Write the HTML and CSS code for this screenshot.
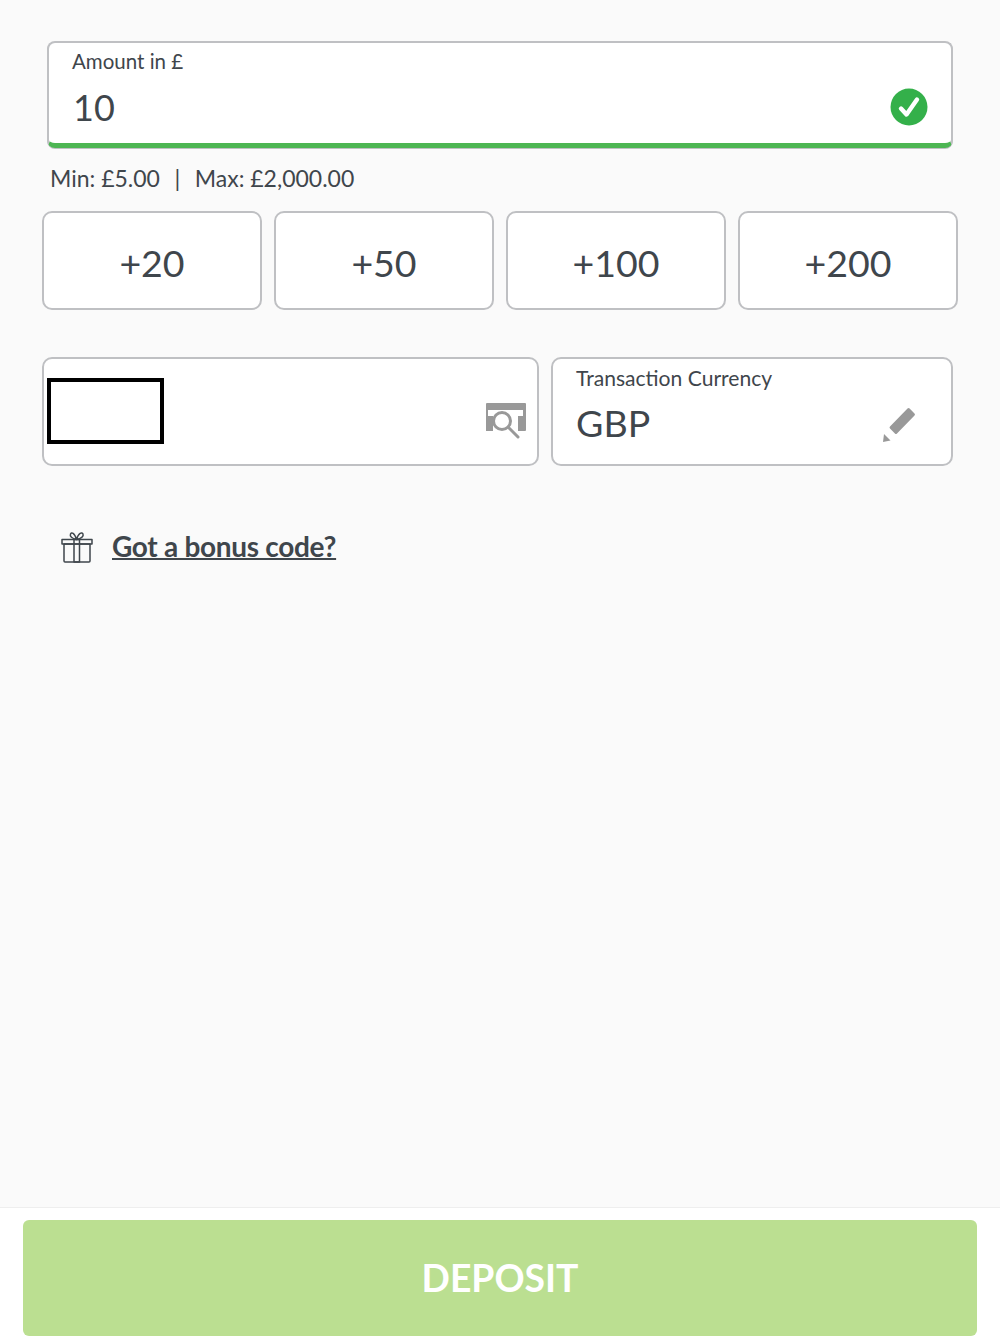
FILE: index.html
```html
<!DOCTYPE html>
<html lang="en">

<head>
    <meta charset="UTF-8">
    <meta name="viewport" content="width=device-width, initial-scale=1.0">
    <title>Deposit</title>
    <link rel="stylesheet" href="styles.css">
</head>

<body>
    <div class="page">
        <form class="deposit-form">
            <div class="amount-field">
                <label class="field-label">Amount in £</label>
                <div class="field-row">
                    <span class="amount-value">10</span>
                    <svg class="check-icon" width="38" height="38" viewBox="0 0 38 38">
                        <circle cx="19" cy="19" r="18.5" fill="#34b04a"/>
                        <path d="M11 20.500l5.500 6L27 11.500" fill="none" stroke="#fff" stroke-width="4.4" stroke-linecap="round" stroke-linejoin="round"/>
                    </svg>
                </div>
            </div>

            <p class="limits">Min: £5.00<span class="sep">|</span>Max: £2,000.00</p>

            <div class="quick-amounts">
                <button type="button" class="quick-btn">+20</button>
                <button type="button" class="quick-btn">+50</button>
                <button type="button" class="quick-btn">+100</button>
                <button type="button" class="quick-btn">+200</button>
            </div>

            <div class="card-row">
                <div class="box card-box">
                    <div class="card-input"></div>
                    <svg class="scan-icon" width="42" height="38" viewBox="0 0 42 38">
                        <rect x="1" y="1" width="40" height="28" rx="1" fill="#999"/>
                        <path d="M3 8h35v6h-5v15H3z" fill="#fff"/>
                        <path d="M1 14h7v15H1z" fill="#999"/>
                        <circle cx="17" cy="19" r="8.500" fill="#fff" stroke="#999" stroke-width="3"/>
                        <path d="M24 26l9 9" stroke="#999" stroke-width="3" stroke-linecap="round"/>
                    </svg>
                </div>
                <div class="box currency-box">
                    <label class="field-label">Transaction Currency</label>
                    <div class="field-row">
                        <span class="currency-value">GBP</span>
                        <svg class="pencil-icon" width="36" height="36" viewBox="0 0 36 36">
                            <path d="M26.500 2.500a1.500 1.500 0 0 1 2.100 0l4.900 4.900a1.500 1.500 0 0 1 0 2.100L16 27.500a1.500 1.500 0 0 1-2.100 0L9 22.600a1.500 1.500 0 0 1 0-2.100z" fill="#999"/>
                            <path d="M3 28l6.500 6.500L2 36z" fill="#999"/>
                        </svg>
                    </div>
                </div>
            </div>

            <div class="bonus">
                <svg class="gift-icon" width="32" height="32" viewBox="0 0 32 32" fill="none" stroke="#3f464c" stroke-width="1.500" stroke-linejoin="round">
                    <path d="M1 8.500h30v4.500H1z"/>
                    <path d="M3 13h26v17a1 1 0 0 1-1 1H4a1 1 0 0 1-1-1z"/>
                    <path d="M13 8.500h5.500V31H13z"/>
                    <path d="M15.500 8.500C11 7.500 8.500 5.500 9.500 3c1-2 4-1.500 6 5.500zM15.500 8.500C20 7.500 23 5.500 22 3c-1-2-4.500-1.500-6.500 5.500z"/>
                </svg>
                <a class="bonus-link" href="#">Got a bonus code?</a>
            </div>
        </form>

        <div class="footer">
            <button type="submit" class="deposit-btn">DEPOSIT</button>
        </div>
    </div>
</body>

</html>
```

FILE: styles.css
```css
* {
    box-sizing: border-box;
}

body {
    margin: 0;
    font-family: Lato, "Open Sans", sans-serif;
    color: #3f464c;
    background: #fafafa;
}

.page {
    display: flex;
    flex-direction: column;
    height: 1340px;
    overflow: hidden;
}

.deposit-form {
    padding: 41px 42px 0;
}

.amount-field {
    width: 906px;
    height: 107px;
    margin-left: 5px;
    padding: 6px 23px 0;
    background: #fff;
    border: 2px solid #bfc0c3;
    border-bottom: 5px solid #4db653;
    border-radius: 8px;
    box-shadow: 0 1px 0 #bfc0c3;
}

.field-label {
    display: block;
    font-size: 20.500px;
    line-height: 25px;
}

.field-row {
    display: flex;
    align-items: center;
    justify-content: space-between;
}

.amount-value {
    margin-left: 1px;
    margin-top: 10px;
    font-size: 36px;
    line-height: 46px;
}

.check-icon {
    margin-top: 10px;
}

.limits {
    margin: 15px 0 0 8px;
    font-size: 23px;
    line-height: 31px;
}

.sep {
    margin: 0 14.500px;
}

.quick-amounts {
    display: grid;
    grid-template-columns: repeat(4, 220px);
    gap: 12px;
    margin-top: 17px;
}

.quick-btn {
    height: 99px;
    padding: 4px 0 0;
    font-family: inherit;
    font-size: 37.500px;
    color: #3f464c;
    background: #fff;
    border: 2px solid #bfc0c3;
    border-radius: 10px;
}

.card-row {
    display: flex;
    gap: 12px;
    margin-top: 47px;
}

.box {
    height: 109px;
    background: #fff;
    border: 2px solid #bfc0c3;
    border-radius: 10px;
}

.card-box {
    position: relative;
    width: 497px;
    padding: 19px 0 0 3px;
}

.card-input {
    width: 117px;
    height: 66px;
    background: #fff;
    border: 4px solid #000;
}

.scan-icon {
    position: absolute;
    top: 43px;
    right: 10px;
}

.currency-box {
    width: 402px;
    padding: 6px 23px 0;
}

.currency-box .field-label {
    font-size: 21.100px;
}

.currency-value {
    margin-top: 10px;
    font-size: 37.500px;
    line-height: 46px;
}

.pencil-icon {
    margin-right: 11px;
    margin-top: 12px;
}

.bonus {
    display: flex;
    align-items: center;
    gap: 19px;
    margin: 62px 0 0 19px;
}

.gift-icon {
    margin-top: 2px;
}

.bonus-link {
    font-size: 28px;
    font-weight: 700;
    line-height: 36px;
    color: #3f464c;
    letter-spacing: -0.3px;
    text-decoration: underline;
    text-decoration-thickness: 2px;
}

.footer {
    margin-top: auto;
    height: 133px;
    padding: 12px 23px 0;
    background: #fff;
    border-top: 1px solid #eeeeee;
}

.deposit-btn {
    display: block;
    width: 100%;
    height: 116px;
    padding: 0 0 2px;
    font-family: inherit;
    font-size: 37.300px;
    font-weight: 700;
    color: #fff;
    background: #bbdf91;
    border: none;
    border-radius: 6px;
}
```
